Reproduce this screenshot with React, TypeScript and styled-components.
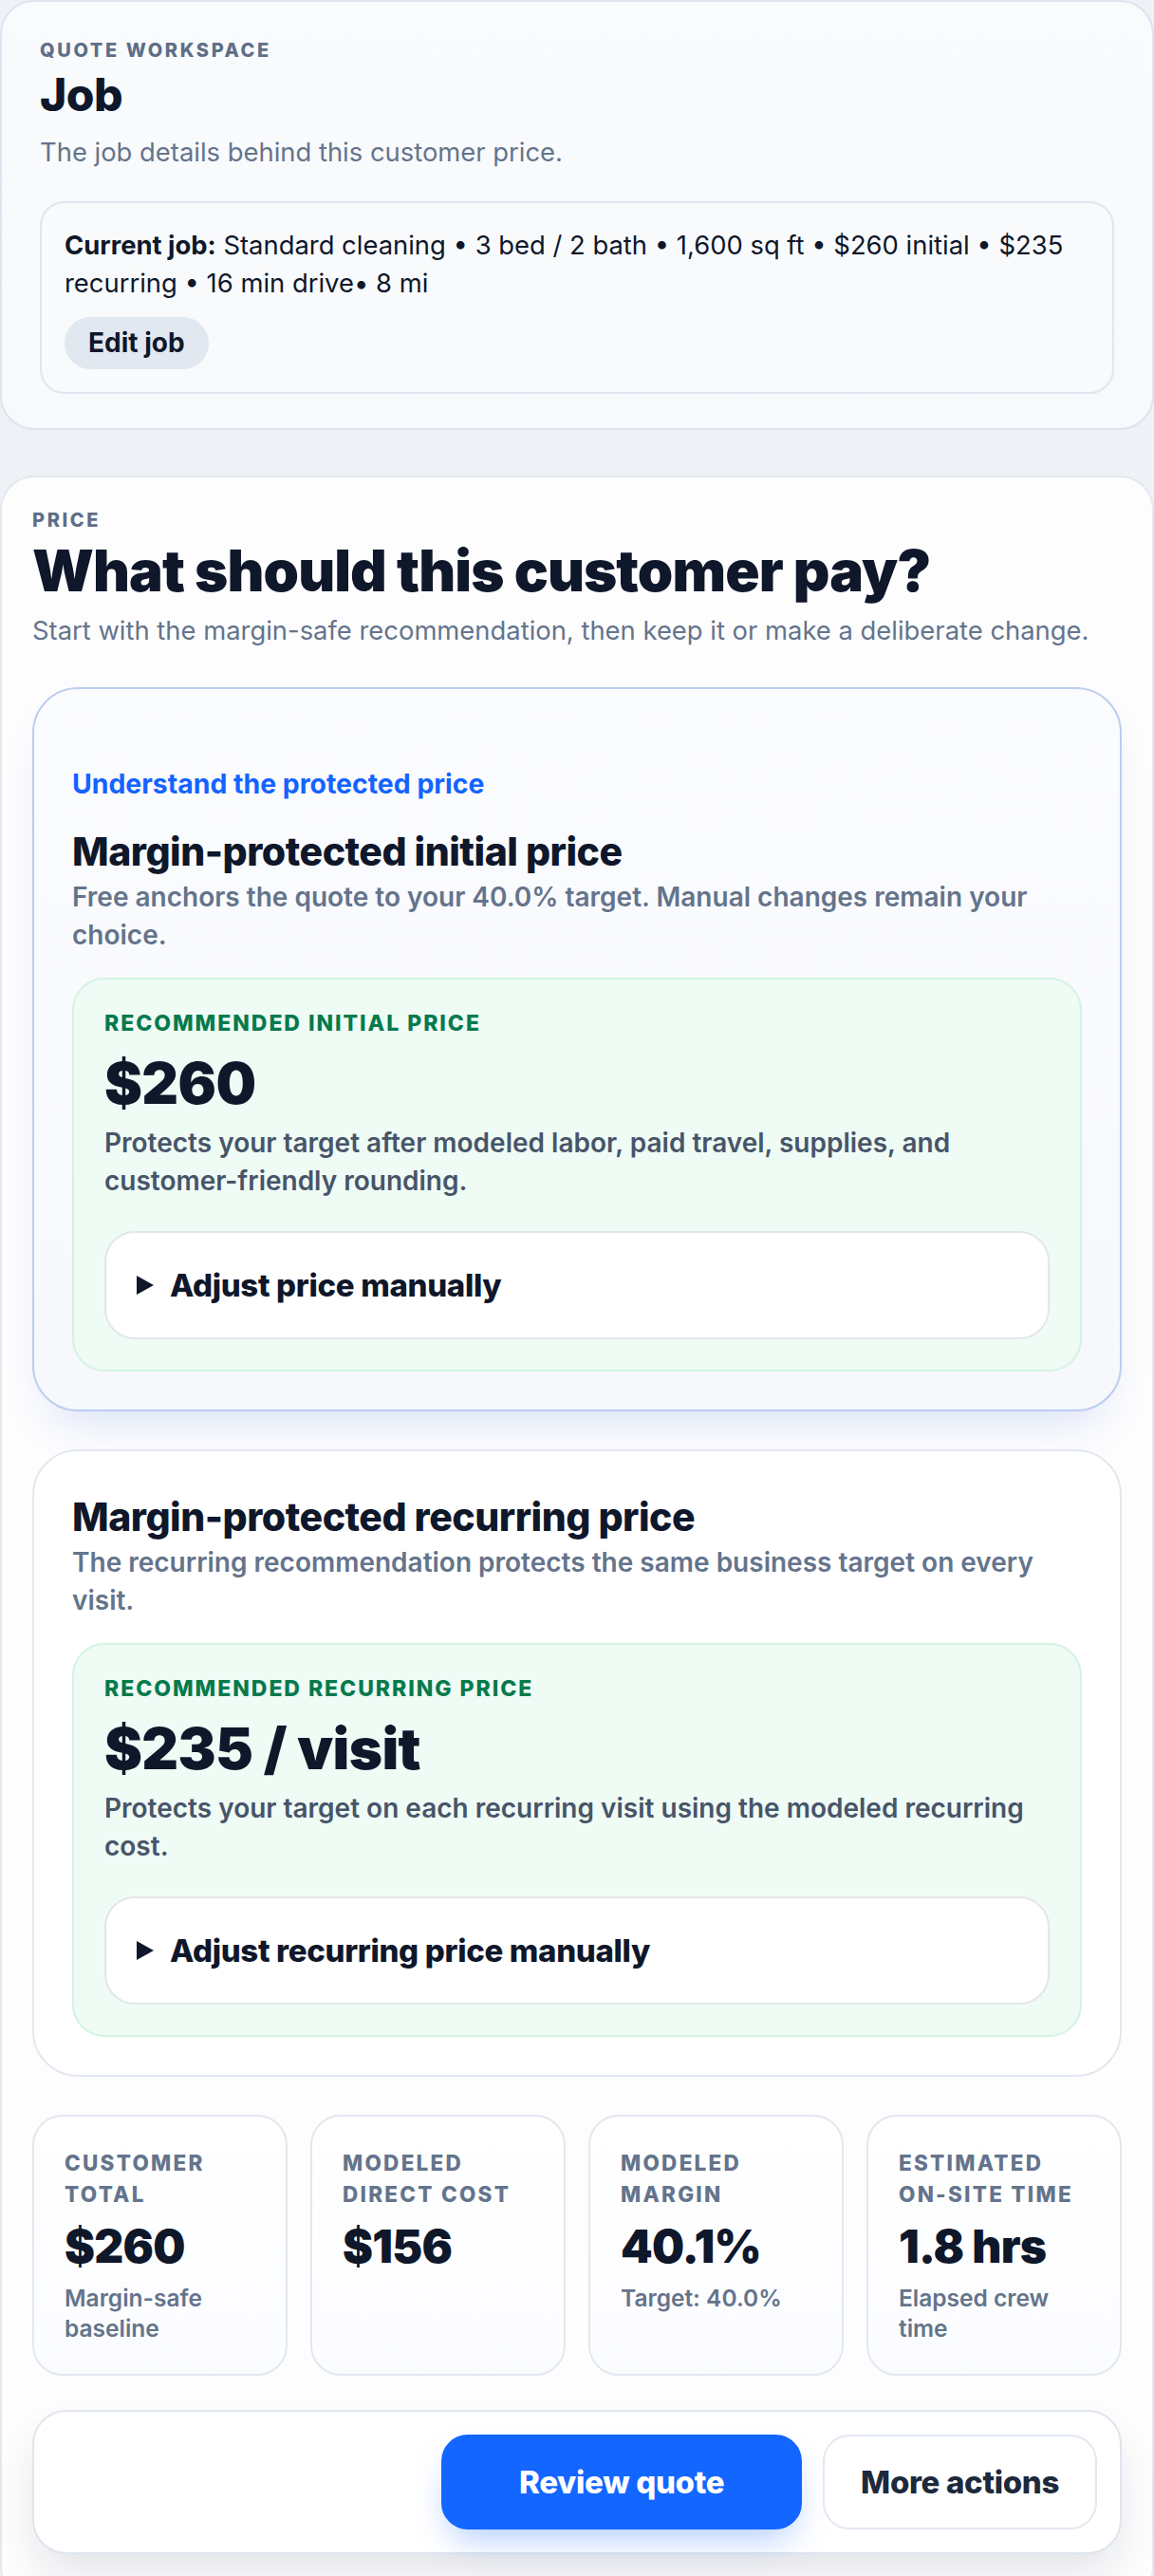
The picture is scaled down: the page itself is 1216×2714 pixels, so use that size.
import React from "react";
import styled, { createGlobalStyle } from "styled-components";

const GlobalStyle = createGlobalStyle`
    *, *::before, *::after {
        box-sizing: border-box;
    }
    html, body {
        margin: 0;
        padding: 0;
    }
    body {
        background: #eef2f7;
        font-family: Inter, "Noto Sans", "Liberation Sans", sans-serif;
        color: #0f172a;
        -webkit-font-smoothing: antialiased;
    }
`;

const Page = styled.main`
    display: flex;
    flex-direction: column;
    gap: 48px;
`;

const JobCard = styled.section`
    border: 2px solid #dde4ef;
    border-radius: 36px;
    padding: 38px 40px 36px;
    background: linear-gradient(180deg, #f9fbfd 0%, #f7f9fc 100%);
`;

const PriceCard = styled.section`
    border: 2px solid #e3e8ef;
    border-radius: 36px;
    padding: 32px 32px 48px;
    background: #fdfdfe;
    display: flex;
    flex-direction: column;
    gap: 40px;
`;

const Eyebrow = styled.div`
    font-size: 20px;
    line-height: 26px;
    font-weight: 800;
    letter-spacing: 0.13em;
    text-transform: uppercase;
    color: #5f6e87;
`;

const JobTitle = styled.h1`
    margin: 8px 0 0;
    font-size: 48px;
    line-height: 1.1;
    font-weight: 850;
    letter-spacing: -0.01em;
`;

const Headline = styled.h1`
    margin: 7px 0 0;
    font-size: 60px;
    line-height: 1.1;
    font-weight: 900;
    letter-spacing: -0.015em;
`;

const Lead = styled.p<{ $gap: number }>`
    margin: ${p => p.$gap}px 0 0;
    font-size: 27.4px;
    line-height: ${p => (p.$gap > 11 ? 42 : 40)}px;
    color: #64748b;
`;

const SummaryBox = styled.div`
    margin-top: 31px;
    border: 2px solid #e0e6ef;
    border-radius: 26px;
    padding: 24px 24px;
    background: #f8fafc;
`;

const SummaryText = styled.p`
    margin: 0;
    font-size: 27.4px;
    line-height: 40px;
    color: #0f172a;

    strong {
        font-weight: 700;
    }
`;

const PillButton = styled.button`
    margin-top: 16px;
    border: none;
    border-radius: 999px;
    padding: 8px 25px;
    background: #e2e8f0;
    color: #0f172a;
    font: inherit;
    font-size: 28px;
    line-height: 39px;
    font-weight: 750;
    cursor: pointer;
`;

const PriceHeader = styled.header`
    display: flex;
    flex-direction: column;
`;

const RecCard = styled.article<{ $featured?: boolean }>`
    border: 2px solid ${p => (p.$featured ? "#bccdf0" : "#e2e8f0")};
    border-radius: 48px;
    padding: ${p => (p.$featured ? "40px" : "45px 40px 40px")};
    background: ${p =>
        p.$featured ? "linear-gradient(180deg, #fbfcfe 0%, #f6f8fc 100%)" : "#ffffff"};
    box-shadow: ${p => (p.$featured ? "0 26px 48px -20px rgba(64, 110, 214, 0.22)" : "none")};
`;

const InfoLink = styled.a`
    display: block;
    margin-top: 40px;
    font-size: 28.4px;
    line-height: 40px;
    font-weight: 700;
    color: #1463ff;
    text-decoration: none;
    cursor: pointer;
`;

const CardHeading = styled.h2<{ $spaced?: boolean }>`
    margin: ${p => (p.$spaced ? "27px" : "0")} 0 0;
    font-size: 41px;
    line-height: 48px;
    font-weight: 800;
    letter-spacing: -0.012em;
`;

const CardNote = styled.p`
    margin: 4px 0 0;
    font-size: 28px;
    line-height: 40px;
    font-weight: 600;
    color: #64748b;
`;

const Recommendation = styled.div`
    margin-top: 25px;
    border: 2px solid #d3f3e2;
    border-radius: 34px;
    padding: 32px;
    background: #effbf5;
`;

const RecLabel = styled.div`
    font-size: 23px;
    line-height: 29px;
    font-weight: 850;
    letter-spacing: 0.085em;
    text-transform: uppercase;
    color: #067a4c;
`;

const RecPrice = styled.div`
    margin-top: 15px;
    font-size: 60px;
    line-height: 66px;
    font-weight: 900;
    letter-spacing: -0.01em;
`;

const RecNote = styled.p`
    margin: 10px 0 0;
    font-size: 28px;
    line-height: 40px;
    font-weight: 600;
    color: #475569;
`;

const Adjust = styled.details`
    margin-top: 33px;
    border: 2px solid #e3e6eb;
    border-radius: 32px;
    background: #ffffff;
`;

const AdjustSummary = styled.summary`
    list-style: none;
    display: flex;
    align-items: center;
    gap: 17px;
    padding: 32px 32px;
    font-size: 33px;
    line-height: 46px;
    font-weight: 800;
    letter-spacing: -0.01em;
    color: #0f172a;
    cursor: pointer;

    &::-webkit-details-marker {
        display: none;
    }

    &::before {
        content: "";
        flex: none;
        width: 0;
        height: 0;
        border-left: 18px solid #0f172a;
        border-top: 10px solid transparent;
        border-bottom: 10px solid transparent;
    }
`;

const MetricGrid = styled.div`
    display: grid;
    grid-template-columns: repeat(4, 1fr);
    gap: 24px;
`;

const Metric = styled.div`
    border: 2px solid #e2e8f0;
    border-radius: 32px;
    padding: 32px;
    background: linear-gradient(180deg, #ffffff 0%, #fbfcfe 100%);
`;

const MetricLabel = styled.div`
    font-size: 22.5px;
    line-height: 33px;
    font-weight: 800;
    letter-spacing: 0.1em;
    text-transform: uppercase;
    color: #64748b;
`;

const MetricValue = styled.div`
    margin-top: 13px;
    font-size: 48px;
    line-height: 51px;
    font-weight: 900;
    letter-spacing: -0.015em;
`;

const MetricNote = styled.div`
    margin-top: 13px;
    font-size: 24.5px;
    line-height: 32px;
    font-weight: 600;
    color: #64748b;
`;

const ActionBar = styled.div`
    margin-top: -4px;
    display: flex;
    justify-content: flex-end;
    gap: 22px;
    border: 2px solid #dfe5ee;
    border-radius: 36px;
    padding: 24px;
    background: #ffffff;
    box-shadow: 0 24px 48px -8px rgba(15, 23, 42, 0.12);
`;

const ActionButton = styled.button<{ $primary?: boolean }>`
    height: 100px;
    min-width: ${p => (p.$primary ? "380px" : "0")};
    padding: 0 38px;
    border-radius: 28px;
    border: 2px solid ${p => (p.$primary ? "#1366ff" : "#e2e8f0")};
    background: ${p => (p.$primary ? "#1366ff" : "#ffffff")};
    color: ${p => (p.$primary ? "#ffffff" : "#1e293b")};
    font: inherit;
    font-size: 33px;
    font-weight: 850;
    letter-spacing: -0.01em;
    cursor: pointer;
    box-shadow: ${p => (p.$primary ? "0 18px 36px -10px rgba(19, 102, 255, 0.35)" : "none")};
`;

type Rec = {
    heading: string;
    note: string;
    label: string;
    price: string;
    detail: string;
    adjust: string;
    featured?: boolean;
};

const RECS: Rec[] = [
    {
        heading: "Margin-protected initial price",
        note: "Free anchors the quote to your 40.0% target. Manual changes remain your choice.",
        label: "Recommended initial price",
        price: "$260",
        detail: "Protects your target after modeled labor, paid travel, supplies, and customer-friendly rounding.",
        adjust: "Adjust price manually",
        featured: true,
    },
    {
        heading: "Margin-protected recurring price",
        note: "The recurring recommendation protects the same business target on every visit.",
        label: "Recommended recurring price",
        price: "$235 / visit",
        detail: "Protects your target on each recurring visit using the modeled recurring cost.",
        adjust: "Adjust recurring price manually",
    },
];

const METRICS = [
    { label: "Customer total", value: "$260", note: "Margin-safe baseline" },
    { label: "Modeled direct cost", value: "$156", note: "" },
    { label: "Modeled margin", value: "40.1%", note: "Target: 40.0%" },
    { label: "Estimated on-site time", value: "1.8 hrs", note: "Elapsed crew time" },
];

const JOB_FACTS = "Standard cleaning • 3 bed / 2 bath • 1,600 sq ft • $260 initial • $235 recurring • 16 min drive• 8 mi";

function RecommendationCard({ rec }: { rec: Rec }) {
    return (
        <RecCard $featured={rec.featured}>
            {rec.featured && <InfoLink>Understand the protected price</InfoLink>}
            <CardHeading $spaced={rec.featured}>{rec.heading}</CardHeading>
            <CardNote>{rec.note}</CardNote>
            <Recommendation>
                <RecLabel>{rec.label}</RecLabel>
                <RecPrice>{rec.price}</RecPrice>
                <RecNote>{rec.detail}</RecNote>
                <Adjust>
                    <AdjustSummary>{rec.adjust}</AdjustSummary>
                </Adjust>
            </Recommendation>
        </RecCard>
    );
}

export default function App() {
    return (
        <>
            <GlobalStyle />
            <Page>
                <JobCard>
                    <Eyebrow>Quote workspace</Eyebrow>
                    <JobTitle>Job</JobTitle>
                    <Lead $gap={12}>The job details behind this customer price.</Lead>
                    <SummaryBox>
                        <SummaryText>
                            <strong>Current job:</strong> {JOB_FACTS}
                        </SummaryText>
                        <PillButton>Edit job</PillButton>
                    </SummaryBox>
                </JobCard>
                <PriceCard>
                    <PriceHeader>
                        <Eyebrow>Price</Eyebrow>
                        <Headline>What should this customer pay?</Headline>
                        <Lead $gap={10}>
                            Start with the margin-safe recommendation, then keep it or make a deliberate change.
                        </Lead>
                    </PriceHeader>
                    {RECS.map(rec => (
                        <RecommendationCard key={rec.label} rec={rec} />
                    ))}
                    <MetricGrid>
                        {METRICS.map(m => (
                            <Metric key={m.label}>
                                <MetricLabel>{m.label}</MetricLabel>
                                <MetricValue>{m.value}</MetricValue>
                                {m.note && <MetricNote>{m.note}</MetricNote>}
                            </Metric>
                        ))}
                    </MetricGrid>
                    <ActionBar>
                        <ActionButton $primary>Review quote</ActionButton>
                        <ActionButton>More actions</ActionButton>
                    </ActionBar>
                </PriceCard>
            </Page>
        </>
    );
}
